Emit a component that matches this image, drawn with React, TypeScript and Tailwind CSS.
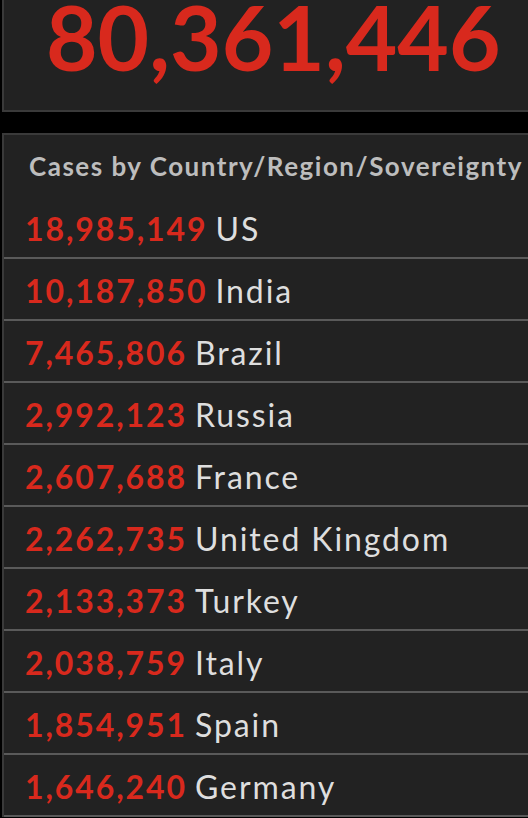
const rows = [
  { n: '18,985,149', c: 'US' },
  { n: '10,187,850', c: 'India' },
  { n: '7,465,806', c: 'Brazil' },
  { n: '2,992,123', c: 'Russia' },
  { n: '2,607,688', c: 'France' },
  { n: '2,262,735', c: 'United Kingdom' },
  { n: '2,133,373', c: 'Turkey' },
  { n: '2,038,759', c: 'Italy' },
  { n: '1,854,951', c: 'Spain' },
  { n: '1,646,240', c: 'Germany' },
]

export default function App() {
  return (
    <div className="h-[818px] w-[528px] overflow-hidden bg-black font-['Lato',sans-serif]">
      <div className="ml-[2px] w-[540px] h-[112px] bg-[#222222] border-l-2 border-b-2 border-[#3a3a3a] flex items-end overflow-hidden">
        <div className="pl-[42px] pb-[29px] text-[89px] leading-none font-bold text-[#d8291d] whitespace-nowrap">80,361,446</div>
      </div>
      <div className="mt-[21px] ml-[2px] w-[540px] bg-[#222222] border-l-2 border-t-2 border-[#3a3a3a]">
        <div className="h-[62px] flex items-center pl-[25px] text-[26px] font-bold tracking-[1.5px] text-[#bdbdbd] whitespace-nowrap">
          Cases by Country/Region/Sovereignty
        </div>
        {rows.map(r => (
          <div key={r.c} className="h-[62px] flex items-center pt-[3px] pl-[21px] border-b-2 border-[#5a5a5a] text-[32px] tracking-[1.9px] whitespace-nowrap">
            <span className="font-bold text-[#d8291d]">{r.n}</span>
            <span className="ml-[8px] text-[#dedede]">{r.c}</span>
          </div>
        ))}
      </div>
    </div>
  )
}
